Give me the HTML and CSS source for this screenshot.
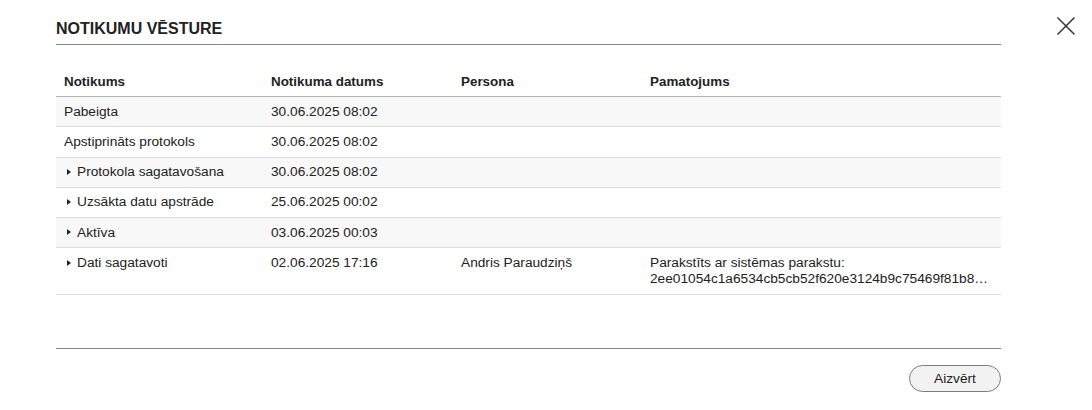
FILE: index.html
```html
<!DOCTYPE html>
<html lang="lv">
<head>
<meta charset="utf-8">
<title>Notikumu vēsture</title>
<link rel="stylesheet" href="styles.css">
</head>
<body>
<div class="page">
  <div class="modal">
    <h1 class="title">NOTIKUMU VĒSTURE</h1>
    <table class="events">
      <colgroup>
        <col class="c1"><col class="c2"><col class="c3"><col class="c4">
      </colgroup>
      <thead>
        <tr><th>Notikums</th><th>Notikuma datums</th><th>Persona</th><th>Pamatojums</th></tr>
      </thead>
      <tbody>
        <tr><td>Pabeigta</td><td>30.06.2025 08:02</td><td></td><td></td></tr>
        <tr><td>Apstiprināts protokols</td><td>30.06.2025 08:02</td><td></td><td></td></tr>
        <tr><td><span class="caret"></span>Protokola sagatavošana</td><td>30.06.2025 08:02</td><td></td><td></td></tr>
        <tr><td><span class="caret"></span>Uzsākta datu apstrāde</td><td>25.06.2025 00:02</td><td></td><td></td></tr>
        <tr><td><span class="caret"></span>Aktīva</td><td>03.06.2025 00:03</td><td></td><td></td></tr>
        <tr><td><span class="caret"></span>Dati sagatavoti</td><td>02.06.2025 17:16</td><td>Andris Paraudziņš</td><td><div>Parakstīts ar sistēmas parakstu:</div><div class="hash">2ee01054c1a6534cb5cb52f620e3124b9c75469f81b88a3d7e5f2c1094b6d8e7</div></td></tr>
      </tbody>
    </table>
    <div class="footer">
      <button class="btn" type="button">Aizvērt</button>
    </div>
  </div>
  <button class="close" type="button" aria-label="Aizvērt">
    <svg width="20" height="20" viewBox="0 0 20 20"><path d="M1.5 1.5 L18.5 18.5 M18.5 1.5 L1.5 18.5" stroke="#333" stroke-width="1.5" fill="none"/></svg>
  </button>
</div>
</body>
</html>
```
FILE: styles.css
```css
html, body {
  margin: 0;
  padding: 0;
  background: #fff;
}
body {
  font-family: "Liberation Sans", Arial, sans-serif;
  font-size: 13.7px;
  color: #222;
}
.page {
  display: flex;
  align-items: flex-start;
  padding-left: 56px;
}
.modal {
  width: 945px;
  flex: none;
}
.title {
  margin: 0;
  padding: 19px 0 5px;
  font-size: 16px;
  line-height: 20px;
  font-weight: bold;
  color: #222;
  border-bottom: 1px solid #8a8a8a;
}
.events {
  width: 945px;
  table-layout: fixed;
  border-collapse: collapse;
  margin-top: 22px;
}
.c1 { width: 207px; }
.c2 { width: 190px; }
.c3 { width: 189px; }
.c4 { width: 359px; }
.events th,
.events td {
  padding: 6.5px 8px 6.5px;
  line-height: 16.2px;
  text-align: left;
  vertical-align: top;
}
.events th {
  font-weight: bold;
  font-size: 13.4px;
  border-bottom: 1px solid #b8b8b8;
}
.events td {
  border-bottom: 1px solid #dcdcdc;
}
.events tbody tr:nth-child(odd) td {
  background: #f8f8f8;
}
.caret {
  display: inline-block;
  width: 0;
  height: 0;
  border-left: 4px solid #222;
  border-top: 3.5px solid transparent;
  border-bottom: 3.5px solid transparent;
  margin: 0 6px 1px 3px;
  vertical-align: middle;
}
.hash {
  white-space: nowrap;
  overflow: hidden;
  text-overflow: ellipsis;
}
.footer {
  margin-top: 53px;
  border-top: 1px solid #8a8a8a;
  padding-top: 16px;
  display: flex;
  justify-content: flex-end;
}
.btn {
  width: 92px;
  height: 27px;
  border: 1px solid #7a7a7a;
  border-radius: 14px;
  background: #f2f2f2;
  font-family: "Liberation Sans", Arial, sans-serif;
  font-size: 13.7px;
  color: #222;
  padding: 0;
}
.close {
  flex: none;
  margin: 16px 0 0 55px;
  width: 20px;
  height: 20px;
  padding: 0;
  border: 0;
  background: none;
}
.close svg {
  display: block;
}
```
